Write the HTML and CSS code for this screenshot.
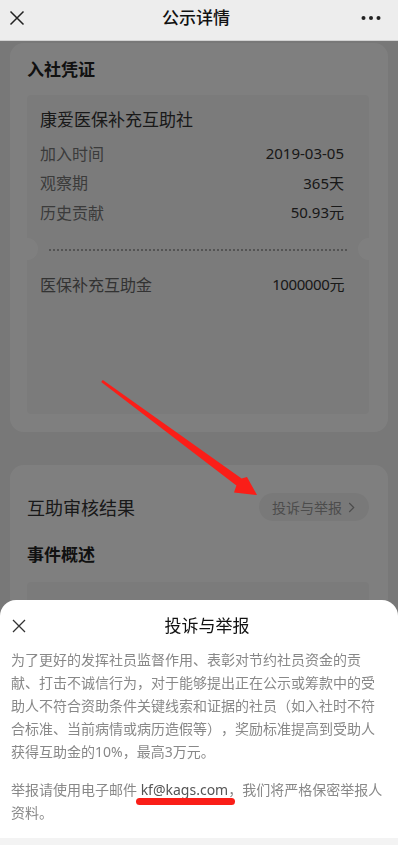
FILE: index.html
```html
<!DOCTYPE html>
<html lang="zh-CN">
<head>
<meta charset="utf-8">
<title>公示详情</title>
<link rel="stylesheet" href="styles.css">
</head>
<body>
<header class="nav">
  <svg class="nav-close" width="16" height="16" viewBox="0 0 16 16"><path d="M1.5 1.5l13 13M14.5 1.5l-13 13" stroke="#222" stroke-width="1.5" fill="none"/></svg>
  <h1 class="nav-title">公示详情</h1>
  <svg class="nav-more" width="20" height="6" viewBox="0 0 20 6"><circle cx="2.5" cy="3" r="2"/><circle cx="10" cy="3" r="2"/><circle cx="17.5" cy="3" r="2"/></svg>
</header>

<main class="page">
  <section class="card">
    <h2 class="card-title">入社凭证</h2>
    <div class="ticket">
      <div class="ticket-name">康爱医保补充互助社</div>
      <div class="row"><span class="label">加入时间</span><span class="value">2019-03-05</span></div>
      <div class="row"><span class="label">观察期</span><span class="value">365天</span></div>
      <div class="row"><span class="label">历史贡献</span><span class="value">50.93元</span></div>
      <div class="divider"></div>
      <div class="row row-amount"><span class="label label-dark">医保补充互助金</span><span class="value value-amount">1000000元</span></div>
    </div>
  </section>

  <section class="card card-result">
    <div class="result-row">
      <span class="result-title">互助审核结果</span>
      <button class="pill">投诉与举报<svg class="chev" width="7" height="11" viewBox="0 0 7 11"><path d="M1.2 1l4.5 4.5L1.2 10" stroke="#999" stroke-width="1.2" fill="none"/></svg></button>
    </div>
    <h2 class="card-title card-title-2">事件概述</h2>
    <div class="summary-box"></div>
  </section>
</main>

<div class="mask"></div>

<svg class="arrow" width="398" height="845" viewBox="0 0 398 845">
  <polygon points="102.8,380.1 241.6,478.6 247,477 257,495 234,492.5 236.4,485.4 101.2,381.9" fill="#fa1e18"/>
</svg>

<div class="sheet">
  <div class="sheet-head">
    <svg class="sheet-close" width="14" height="14" viewBox="0 0 14 14"><path d="M1 1l12 12M13 1L1 13" stroke="#333" stroke-width="1.3" fill="none"/></svg>
    <div class="sheet-title">投诉与举报</div>
  </div>
  <div class="sheet-body">
    <p class="para">为了更好的发挥社员监督作用、表彰对节约社员资金的贡献、打击不诚信行为，对于能够提出正在公示或筹款中的受助人不符合资助条件关键线索和证据的社员（如入社时不符合标准、当前病情或病历造假等），奖励标准提高到受助人获得互助金的10%，最高3万元。</p>
    <p class="para para-2">举报请使用电子邮件 <span class="email">kf@kags.com</span>，我们将严格保密举报人资料。</p>
  </div>
  <div class="sheet-foot"></div>
</div>
</body>
</html>
```

FILE: styles.css
```css
* { box-sizing: border-box; }

html, body {
  margin: 0;
  padding: 0;
}

body {
  width: 398px;
  height: 845px;
  overflow: hidden;
  background: #f0f0f0;
  font-family: "Noto Sans", "Noto Sans CJK SC", sans-serif;
  color: #333;
  text-spacing-trim: space-all;
}

/* top navigation */
.nav {
  height: 41px;
  padding-bottom: 5px;
  background: #ededed;
  border-bottom: 1px solid #d2d2d2;
  display: grid;
  grid-template-columns: 56px 1fr 56px;
  align-items: center;
}

.nav-close {
  margin-left: 9px;
}

.nav-title {
  margin: 0;
  padding-right: 6px;
  text-align: center;
  font-size: 17px;
  line-height: 24px;
  font-weight: 500;
  color: #111;
}

.nav-more {
  justify-self: end;
  margin-right: 17px;
  fill: #222;
}

/* page content */
.page {
  padding-top: 2px;
}

.card {
  margin: 0 10px;
  background: #fff;
  border-radius: 14px;
  padding: 15px 19px 18px 17px;
}

.card-title {
  margin: 0;
  font-size: 17px;
  line-height: 24px;
  font-weight: 700;
  color: #222;
}

.ticket {
  position: relative;
  margin-top: 13px;
  background: #f6f6f6;
  border-radius: 4px;
  padding: 13px 25px 115.5px 13px;
}

.ticket::before,
.ticket::after {
  content: "";
  position: absolute;
  top: 143px;
  width: 22px;
  height: 22px;
  border-radius: 50%;
  background: #fff;
}

.ticket::before { left: -11px; }
.ticket::after { right: -11px; }

.ticket-name {
  font-size: 17px;
  line-height: 24px;
  color: #333;
  margin-bottom: 6px;
}

.row {
  display: flex;
  justify-content: space-between;
  align-items: center;
  height: 29.5px;
}

.label {
  font-size: 16px;
  color: #777;
}

.label-dark {
  color: #666;
}

.value {
  font-size: 15px;
  color: #333;
}

.value-amount {
  letter-spacing: -0.4px;
}

.divider {
  margin: 22.5px -4px 0 9px;
  height: 2px;
  background: repeating-linear-gradient(to right, #a8a8a8 0 2px, transparent 2px 4px);
}

.row-amount {
  margin-top: 18px;
}

.card-result {
  margin-top: 33px;
  padding-top: 28px;
}

.result-row {
  display: flex;
  justify-content: space-between;
  align-items: center;
  height: 28px;
}

.result-title {
  font-size: 18px;
  color: #333;
}

.pill {
  height: 28px;
  border: none;
  border-radius: 14px;
  background: #f3f3f3;
  padding: 0 14px 0 13px;
  display: flex;
  align-items: center;
  gap: 6px;
  font-family: inherit;
  font-size: 14px;
  color: #999;
}

.card-title-2 {
  margin-top: 22px;
}

.summary-box {
  margin-top: 15px;
  height: 220px;
  background: #f6f6f6;
  border-radius: 4px;
}

/* dim mask over content */
.mask {
  position: fixed;
  top: 41px;
  left: 0;
  right: 0;
  bottom: 0;
  background: rgba(0, 0, 0, 0.5);
}

/* annotation arrow */
.arrow {
  position: absolute;
  top: 0;
  left: 0;
  pointer-events: none;
}

/* bottom sheet */
.sheet {
  position: fixed;
  left: 0;
  right: 0;
  bottom: 0;
  height: 245px;
  background: #fff;
  border-radius: 16px 16px 0 0;
  display: flex;
  flex-direction: column;
}

.sheet-head {
  display: grid;
  grid-template-columns: 56px 1fr 40px;
  align-items: center;
  padding-top: 14px;
  height: 38px;
}

.sheet-close {
  margin-left: 12px;
}

.sheet-title {
  text-align: center;
  font-size: 17px;
  line-height: 24px;
  font-weight: 400;
  color: #111;
}

.sheet-body {
  margin-top: 9.5px;
  padding: 0 11px;
}

.para {
  margin: 0;
  font-size: 14px;
  line-height: 23px;
  color: #888;
}

.para-2 {
  margin-top: 15px;
}

.email {
  position: relative;
  color: #555;
}

.email::after {
  content: "";
  position: absolute;
  left: -5px;
  right: -7px;
  bottom: -6px;
  height: 7px;
  border-radius: 4px;
  background: #fa1e18;
}

.sheet-foot {
  margin-top: auto;
  height: 7px;
  background: #f3f3f3;
}
```
